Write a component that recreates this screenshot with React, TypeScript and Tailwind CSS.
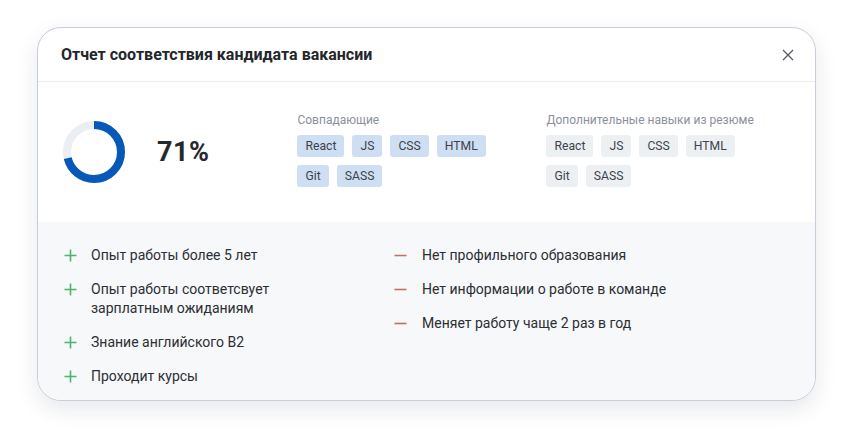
const matched = ["React", "JS", "CSS", "HTML", "Git", "SASS"];
const extra = ["React", "JS", "CSS", "HTML", "Git", "SASS"];

const pros = [
  "Опыт работы более 5 лет",
  "Опыт работы соответсвует зарплатным ожиданиям",
  "Знание английского B2",
  "Проходит курсы",
];
const cons = [
  "Нет профильного образования",
  "Нет информации о работе в команде",
  "Меняет работу чаще 2 раз в год",
];

function Donut({ value }: { value: number }) {
  const r = 27;
  const c = 2 * Math.PI * r;
  return (
    <svg width="64" height="64" viewBox="0 0 64 64" className="-rotate-90">
      <circle cx="32" cy="32" r={r} fill="none" stroke="#ebeef2" strokeWidth="8" />
      <circle
        cx="32"
        cy="32"
        r={r}
        fill="none"
        stroke="#0758b8"
        strokeWidth="8"
        strokeDasharray={`${(c * value) / 100} ${c}`}
      />
    </svg>
  );
}

function Tag({ label, tone }: { label: string; tone: "blue" | "gray" }) {
  return (
    <span
      className={
        tone === "blue"
          ? "h-[22px] px-2 rounded-[3px] bg-[#cfdff3] text-[#3d424a] text-[12.2px] leading-[22px]"
          : "h-[22px] px-2 rounded-[3px] bg-[#edf0f3] text-[#3d424a] text-[12.2px] leading-[22px]"
      }
    >
      {label}
    </span>
  );
}

function SkillGroup({ title, items, tone }: { title: string; items: string[]; tone: "blue" | "gray" }) {
  return (
    <div className="flex flex-col">
      <div className="text-[12px] leading-[16px] text-[#8b9099]">{title}</div>
      <div className="mt-[7px] flex flex-wrap gap-2 w-[200px]">
        {items.map((s) => (
          <Tag key={s} label={s} tone={tone} />
        ))}
      </div>
    </div>
  );
}

function Plus() {
  return (
    <svg width="13" height="13" viewBox="0 0 13 13" className="shrink-0 mt-[3px]">
      <path d="M6.5 0.5v12M0.5 6.5h12" stroke="#4bb36a" strokeWidth="1.6" />
    </svg>
  );
}

function Minus() {
  return (
    <svg width="13" height="13" viewBox="0 0 13 13" className="shrink-0 mt-[3px]">
      <path d="M0.5 6.5h12" stroke="#c86b6b" strokeWidth="1.6" />
    </svg>
  );
}

export default function App() {
  return (
    <div
      className="w-[853px] h-[447px] bg-white px-[37px] pt-[27px]"
      style={{ fontFamily: "Roboto, 'Noto Sans', sans-serif" }}
    >
      <div className="w-[779px] h-[374px] rounded-[24px] border border-[#c9ccdc] bg-white overflow-hidden shadow-[0_8px_22px_rgba(20,30,60,0.10)] flex flex-col">
        <div className="h-[54px] flex items-center justify-between pl-[23px] pr-[21px] border-b border-[#ececf0]">
          <h2 className="text-[16px] font-bold text-[#23262b]">Отчет соответствия кандидата вакансии</h2>
          <svg width="12" height="12" viewBox="0 0 12 12">
            <path d="M1 1l10 10M11 1L1 11" stroke="#55595f" strokeWidth="1.3" />
          </svg>
        </div>

        <div className="h-[140px] flex items-start pl-[24px] pt-[30px]">
          <div className="flex items-center mt-[8px]">
            <Donut value={71} />
            <div className="ml-[31px] text-[27px] font-bold text-[#25282d] tracking-[0.5px]">71%</div>
          </div>
          <div className="ml-[88px]">
            <SkillGroup title="Совпадающие" items={matched} tone="blue" />
          </div>
          <div className="ml-[49px]">
            <SkillGroup title="Дополнительные навыки из резюме" items={extra} tone="gray" />
          </div>
        </div>

        <div className="flex-1 bg-[#f7f8fa] flex pl-[26px] pt-[24px]">
          <ul className="w-[330px] flex flex-col gap-[15px]">
            {pros.map((p) => (
              <li key={p} className="flex gap-[14px] text-[14px] leading-[19px] text-[#2b2e34]">
                <Plus />
                <span className="w-[210px]">{p}</span>
              </li>
            ))}
          </ul>
          <ul className="flex flex-col gap-[15px]">
            {cons.map((p) => (
              <li key={p} className="flex gap-[15px] text-[14px] leading-[19px] text-[#2b2e34]">
                <Minus />
                <span>{p}</span>
              </li>
            ))}
          </ul>
        </div>
      </div>
    </div>
  );
}
